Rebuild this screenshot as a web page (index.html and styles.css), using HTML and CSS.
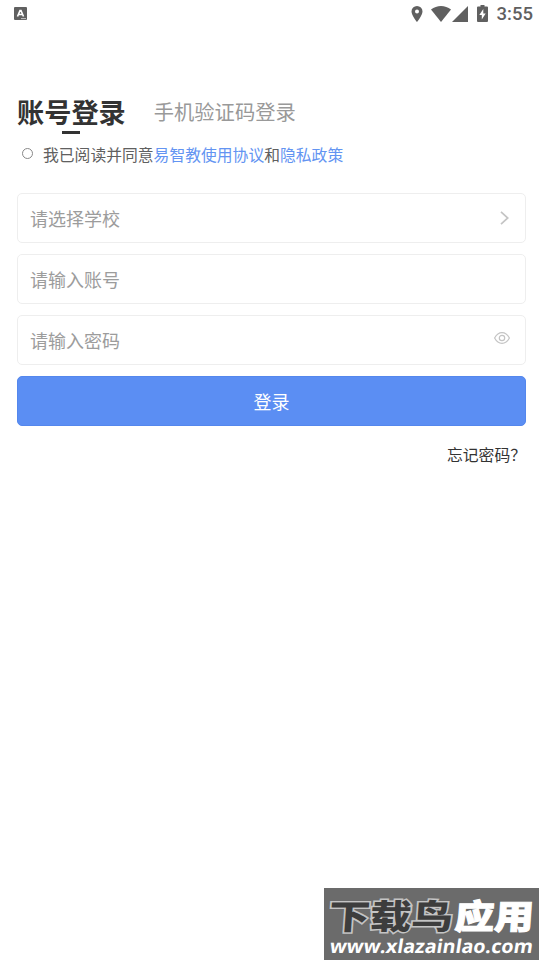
FILE: index.html
```html
<!DOCTYPE html>
<html lang="zh-CN">
<head>
<meta charset="utf-8">
<title>账号登录</title>
<link rel="stylesheet" href="styles.css">
</head>
<body>
<header class="status">
  <svg class="notice" viewBox="0 0 13 13"><rect width="13" height="13" rx="1" fill="#606060"/><path d="M3.500 9.500 6 3.600h1L9.500 9.500M4.700 7.500h3.600" fill="none" stroke="#fff" stroke-width="1.600"/><path d="M7 11.600h5" stroke="#ddd" stroke-width=".8"/></svg>
  <div class="indicators">
    <svg class="pin" viewBox="0 0 12 16"><path fill-rule="evenodd" d="M6 0a5.500 5.500 0 0 0-5.500 5.500C.5 9.500 6 16 6 16s5.500-6.500 5.500-10.500A5.500 5.500 0 0 0 6 0zm0 3.500a2 2 0 1 1 0 4 2 2 0 0 1 0-4z"/></svg>
    <svg class="wifi" viewBox="0 0 20 16"><path d="M0 3.600Q4.500 0 10 0t10 3.600L10 16z"/></svg>
    <svg class="signal" viewBox="0 0 16 16"><path d="M16 0v16H0z"/></svg>
    <svg class="battery" viewBox="0 0 11 17"><path fill-rule="evenodd" d="M3.500 0h4v1.600H10q1 0 1 1V16q0 1-1 1H1q-1 0-1-1V2.600q0-1 1-1h2.500zM6.300 4 2.300 10h2.500v4.500L8.700 8.500H6.300z"/></svg>
    <span class="clock">3:55</span>
  </div>
</header>
<main class="login">
  <nav class="tabs">
    <a class="tab tab-active">账号登录</a>
    <a class="tab">手机验证码登录</a>
  </nav>
  <div class="agreement">
    <span class="radio"></span>
    <p>我已阅读并同意<a>易智教使用协议</a>和<a>隐私政策</a></p>
  </div>
  <form class="fields">
    <div class="field"><span>请选择学校</span><svg class="chevron" viewBox="0 0 9 14"><path d="M1 .8 7.800 7 1 13.200"/></svg></div>
    <div class="field"><span>请输入账号</span></div>
    <div class="field"><span>请输入密码</span><svg class="eye" viewBox="0 0 16 12"><path d="M.6 6Q3.500.6 8 .6T15.400 6Q12.500 11.400 8 11.400T.6 6z"/><circle cx="8" cy="6" r="2.700"/></svg></div>
    <div class="submit">登录</div>
  </form>
  <a class="forgot">忘记密码？</a>
</main>
<aside class="watermark">
  <svg viewBox="0 0 215 72">
    <g class="brand" transform="translate(0 41) skewX(-4)"><text class="brand-dark" x="4" y="0" textLength="124" lengthAdjust="spacingAndGlyphs">下载鸟</text><text class="brand-light" x="130" y="0" textLength="79" lengthAdjust="spacingAndGlyphs">应用</text></g>
    <g transform="translate(0 65) skewX(-9)"><text class="site" x="5" y="0" textLength="203" lengthAdjust="spacingAndGlyphs">www.xlazainlao.com</text></g>
  </svg>
</aside>
</body>
</html>
```
FILE: styles.css
```css
* { box-sizing: border-box; }
body {
  margin: 0;
  height: 964px;
  position: relative;
  overflow: hidden;
  background: #fff;
  color: #333;
  font-family: "Noto Sans CJK SC", sans-serif;
}
svg { display: block; flex: none; }
p { margin: 0; }
.status {
  height: 27px;
  padding: 0 9px 0 14px;
  display: flex;
  align-items: center;
  justify-content: space-between;
}
.notice { width: 13px; height: 13px; }
.indicators { display: flex; align-items: center; fill: #606060; }
.pin { width: 12px; height: 16px; margin-right: 8px; }
.wifi { width: 20px; height: 16px; margin-right: 1px; }
.signal { width: 16px; height: 16px; margin-right: 9px; }
.battery { width: 11px; height: 17px; margin-right: 9px; }
.clock { font: 500 18.5px/28px Roboto, sans-serif; color: #606060; }
.login { padding: 65px 16px 0 17px; display: flex; flex-direction: column; }
.tabs { height: 43px; display: flex; gap: 28px; }
.tab { font-size: 20.3px; line-height: 38px; color: #999; }
.tab-active { font-size: 27.2px; font-weight: 700; line-height: 39px; color: #333; }
.tab-active::after {
  content: "";
  display: block;
  width: 18px;
  height: 3px;
  margin: 0 auto;
  background: #333;
}
.agreement { height: 40px; display: flex; gap: 10px; padding-left: 5px; }
.radio { width: 11px; height: 11px; margin-top: 13px; border: 1px solid #888; border-radius: 50%; }
.agreement p { font-size: 15.8px; line-height: 40px; color: #606060; }
.agreement a { color: #6394f2; }
.fields { margin-top: 18px; display: flex; flex-direction: column; gap: 11px; }
.field, .submit {
  height: 50px;
  border-radius: 5px;
  font-size: 18px;
  line-height: 48px;
}
.field {
  display: flex;
  align-items: center;
  justify-content: space-between;
  border: 1px solid #eee;
  padding: 0 15px 0 12px;
  color: #9c9c9c;
}
.chevron, .eye { fill: none; stroke: #c4c4c4; }
.chevron { width: 9px; height: 14px; stroke-width: 1.7; margin-right: 1px; }
.eye { width: 16px; height: 12px; margin-bottom: 4px; stroke-width: 1.2; }
.submit { background: #5b8ef3; border: 1px solid #5487ed; color: #fff; text-align: center; }
.forgot { align-self: flex-end; margin-top: 15px; font-size: 15.8px; line-height: 28px; }
.watermark {
  position: absolute;
  left: 324px;
  top: 888px;
  width: 215px;
  height: 72px;
  background: #6b6b6b;
}
.brand { font-size: 34px; font-weight: 900; paint-order: stroke; }
.brand-dark { fill: #3d3d3d; stroke: #c4c4c4; stroke-width: 3px; }
.brand-light { fill: #fff; stroke: #fff; stroke-width: 1px; }
.site { font: 700 19px "Open Sans", sans-serif; fill: #fff; }
```
